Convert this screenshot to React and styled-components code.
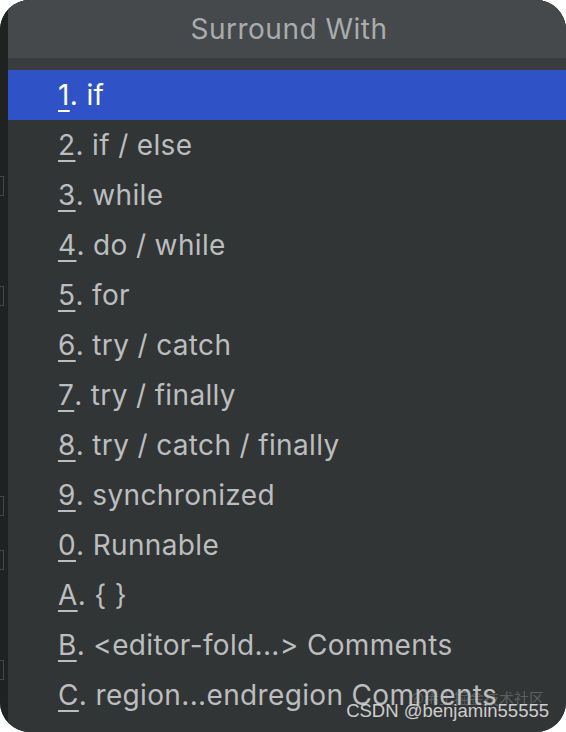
import React from "react";
import styled, { createGlobalStyle } from "styled-components";

const Global = createGlobalStyle`
  html, body { margin: 0; padding: 0; background: #ffffff; }
  body { font-family: Inter, "Liberation Sans", "Noto Sans CJK SC", sans-serif; }
`;

const Frame = styled.div`
  position: relative;
  width: 566px;
  height: 732px;
  border-radius: 30px;
  overflow: hidden;
  display: flex;
  background: #202221;
`;

const Gutter = styled.div`
  width: 8px;
  flex: none;
  display: flex;
  flex-direction: column;
  background: #202221;
`;

const GutterBox = styled.div`
  width: 3px;
  height: 18px;
  margin-top: ${(p) => p.$gap}px;
  border: 1px solid #444746;
  border-left: none;
`;

const Popup = styled.div`
  flex: 1;
  display: flex;
  flex-direction: column;
  background: #323536;
`;

const Header = styled.div`
  height: 58px;
  display: flex;
  align-items: center;
  justify-content: center;
  padding-left: 4px;
  background: #46494b;
  color: #a9acae;
  font-size: 28px;
  letter-spacing: 0.5px;
`;

const Band = styled.div`
  height: 12px;
  background: #393c3d;
`;

const List = styled.div`
  display: flex;
  flex-direction: column;
`;

const Row = styled.div`
  height: 50px;
  display: flex;
  align-items: center;
  padding-left: 50px;
  font-size: 28px;
  letter-spacing: 0.35px;
  color: ${(p) => (p.$selected ? "#ffffff" : "#bcbdbe")};
  background: ${(p) => (p.$selected ? "#2f53c6" : "transparent")};
  white-space: nowrap;
`;

const Key = styled.span`
  text-decoration: underline;
  text-decoration-thickness: 2px;
  text-underline-offset: 5px;
`;

const Watermark = styled.div`
  position: absolute;
  right: 17px;
  bottom: 10px;
  font-family: "Liberation Sans", sans-serif;
  font-size: 18.5px;
  color: rgba(235, 235, 235, 0.85);
`;

const WatermarkBack = styled.div`
  position: absolute;
  right: 22px;
  bottom: 24px;
  font-family: "Noto Sans CJK SC", sans-serif;
  font-size: 15px;
  color: rgba(200, 200, 200, 0.3);
`;

const items = [
  ["1", ". if"],
  ["2", ". if / else"],
  ["3", ". while"],
  ["4", ". do / while"],
  ["5", ". for"],
  ["6", ". try / catch"],
  ["7", ". try / finally"],
  ["8", ". try / catch / finally"],
  ["9", ". synchronized"],
  ["0", ". Runnable"],
  ["A", ". { }"],
  ["B", ". <editor-fold...> Comments"],
  ["C", ". region...endregion Comments"],
];

const gutterGaps = [176, 90, 190, 34, 90];

export default function App() {
  return (
    <>
      <Global />
      <Frame>
        <Gutter>
          {gutterGaps.map((g, i) => (
            <GutterBox key={i} $gap={g} />
          ))}
        </Gutter>
        <Popup>
          <Header>Surround With</Header>
          <Band />
          <List>
            {items.map(([k, rest], i) => (
              <Row key={k} $selected={i === 0}>
                <Key>{k}</Key>
                {rest}
              </Row>
            ))}
          </List>
        </Popup>
        <WatermarkBack>@稀土掘金技术社区</WatermarkBack>
        <Watermark>CSDN @benjamin55555</Watermark>
      </Frame>
    </>
  );
}
